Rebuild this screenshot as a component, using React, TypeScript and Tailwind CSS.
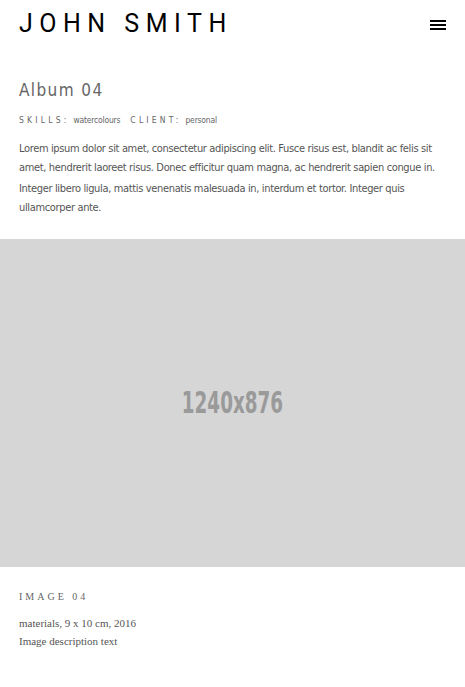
export default function App() {
  return (
    <div className="min-h-[687px] bg-white">
      <header className="flex items-center justify-between px-[19px] pt-[10px]">
        <h1
          className="text-[25px] leading-[28px] tracking-[6.5px] text-black"
          style={{ fontFamily: 'Roboto, sans-serif' }}
        >
          JOHN SMITH
        </h1>
        <button className="flex flex-col gap-[2px] pt-[1px]">
          <span className="block h-[2px] w-[16px] bg-black" />
          <span className="block h-[2px] w-[16px] bg-black" />
          <span className="block h-[2px] w-[16px] bg-black" />
        </button>
      </header>

      <section
        className="px-[19px] pt-[40px] text-[#666]"
        style={{ fontFamily: '"DejaVu Sans Condensed", sans-serif' }}
      >
        <h2 className="text-[17px] leading-[24px] tracking-[1.4px] text-[#666]">Album 04</h2>
        <div className="mt-[12px] flex items-baseline gap-[10px] text-[8.5px] tracking-[-0.2px]">
          <span>
            <span className="mr-[4px] tracking-[3.2px]">SKILLS:</span>watercolours
          </span>
          <span>
            <span className="mr-[4px] tracking-[3.2px]">CLIENT:</span>personal
          </span>
        </div>
        <p className="mt-[12px] text-[11px] leading-[19px] tracking-[-0.35px] text-[#555]">
          Lorem ipsum dolor sit amet, consectetur adipiscing elit. Fusce risus est, blandit ac felis sit
          amet, hendrerit laoreet risus. Donec efficitur quam magna, ac hendrerit sapien congue in.
        </p>
        <p className="mt-[2px] text-[11px] leading-[19px] tracking-[-0.35px] text-[#555]">
          Integer libero ligula, mattis venenatis malesuada in, interdum et tortor. Integer quis
          ullamcorper ante.
        </p>
      </section>

      <div className="mt-[22px] flex h-[328px] items-center justify-center bg-[#d6d6d6]">
        <span
          className="inline-block scale-x-[0.68] text-[30px] font-bold text-[#9a9a9a]"
          style={{ fontFamily: '"DejaVu Sans Condensed", sans-serif' }}
        >
          1240x876
        </span>
      </div>

      <section className="px-[19px] pt-[22px] text-[#555]" style={{ fontFamily: '"Liberation Serif", serif' }}>
        <div className="text-[10px] tracking-[3px] text-[#666]">IMAGE 04</div>
        <p className="mt-[10px] text-[11px] leading-[18px]">materials, 9 x 10 cm, 2016</p>
        <p className="text-[11px] leading-[18px]">Image description text</p>
      </section>
    </div>
  )
}
